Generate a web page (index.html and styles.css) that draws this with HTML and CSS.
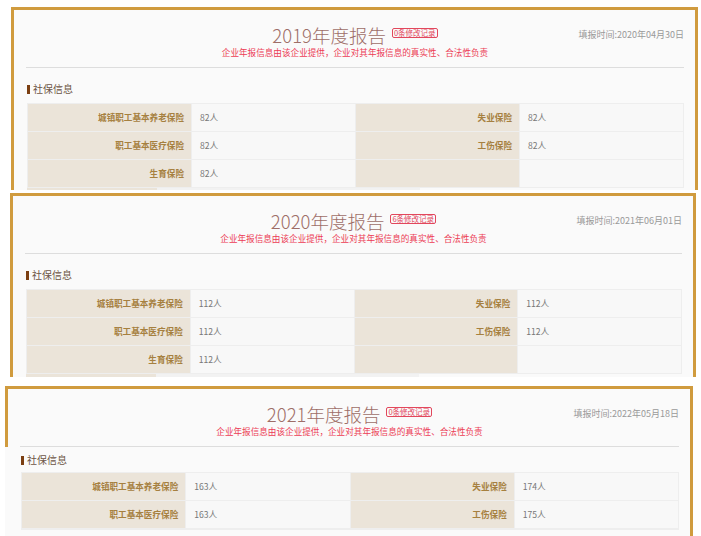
FILE: index.html
```html
<!DOCTYPE html>
<html lang="zh-CN">
<head>
    <meta charset="UTF-8">
    <meta name="viewport" content="width=device-width, initial-scale=1.0">
    <title>企业年度报告</title>
    <link rel="stylesheet" href="styles.css">
</head>
<body>

    <!-- 2019 -->
    <div class="report report-2019">
        <div class="report-head">
            <div class="title-row">
                <span></span>
                <div class="title-group">
                    <span class="title">2019年度报告</span>
                    <span class="badge">0条修改记录</span>
                </div>
                <span class="fill-time">填报时间:2020年04月30日</span>
            </div>
            <div class="notice">企业年报信息由该企业提供，企业对其年报信息的真实性、合法性负责</div>
            <div class="divider"></div>
        </div>
        <div class="report-body">
            <div class="section-title">社保信息</div>
            <table class="info-table">
                <tr><th>城镇职工基本养老保险</th><td>82人</td><th>失业保险</th><td>82人</td></tr>
                <tr><th>职工基本医疗保险</th><td>82人</td><th>工伤保险</th><td>82人</td></tr>
                <tr><th>生育保险</th><td>82人</td><th></th><td></td></tr>
            </table>
            <div class="next-stub"><span></span><span></span></div>
        </div>
    </div>

    <!-- 2020 -->
    <div class="report report-2020">
        <div class="report-head">
            <div class="title-row">
                <span></span>
                <div class="title-group">
                    <span class="title">2020年度报告</span>
                    <span class="badge">6条修改记录</span>
                </div>
                <span class="fill-time">填报时间:2021年06月01日</span>
            </div>
            <div class="notice">企业年报信息由该企业提供，企业对其年报信息的真实性、合法性负责</div>
            <div class="divider"></div>
        </div>
        <div class="report-body">
            <div class="section-title">社保信息</div>
            <table class="info-table">
                <tr><th>城镇职工基本养老保险</th><td>112人</td><th>失业保险</th><td>112人</td></tr>
                <tr><th>职工基本医疗保险</th><td>112人</td><th>工伤保险</th><td>112人</td></tr>
                <tr><th>生育保险</th><td>112人</td><th></th><td></td></tr>
            </table>
            <div class="next-stub"><span></span><span></span></div>
        </div>
    </div>

    <!-- 2021 -->
    <div class="report report-2021">
        <div class="report-head">
            <div class="title-row">
                <span></span>
                <div class="title-group">
                    <span class="title">2021年度报告</span>
                    <span class="badge">0条修改记录</span>
                </div>
                <span class="fill-time">填报时间:2022年05月18日</span>
            </div>
            <div class="notice">企业年报信息由该企业提供，企业对其年报信息的真实性、合法性负责</div>
            <div class="divider"></div>
        </div>
        <div class="report-body">
            <div class="section-title">社保信息</div>
            <table class="info-table">
                <tr><th>城镇职工基本养老保险</th><td>163人</td><th>失业保险</th><td>174人</td></tr>
                <tr><th>职工基本医疗保险</th><td>163人</td><th>工伤保险</th><td>175人</td></tr>
                <!-- 下一行在截图边缘被裁掉 -->
                <tr><th></th><td></td><th></th><td></td></tr>
            </table>
        </div>
    </div>

</body>
</html>
```

FILE: styles.css
```css
body {
    margin: 0;
    background-color: #fff;
    font-family: "Noto Sans CJK SC", "Noto Sans", sans-serif;
}
.report {
    box-sizing: border-box;
    background-color: #fafafa;
    border-top: 3px solid #d09b3e;
    overflow: hidden;
}
.report-2019 {
    width: 687px;
    height: 183px;
    margin: 7px 0 0 11px;
}
.report-2020 {
    width: 686px;
    height: 184px;
    margin: 3px 0 0 10px;
}
.report-2021 {
    width: 688px;
    height: 150px;
    margin: 9px 0 0 5px;
}
.report-head, .report-body {
    border-left: 3px solid #d09b3e;
    border-right: 3px solid #d09b3e;
    padding: 0 11px 0 12px;
}
.report-head {
    padding-top: 15px;
}
.report-body {
    padding-top: 14px;
    padding-bottom: 20px;
}
.report-2021 .report-body {
    padding-top: 6px;
    border-left-color: transparent;
}
.title-row {
    display: grid;
    grid-template-columns: 1fr auto 1fr;
    height: 21px;
}
.title-group {
    display: flex;
    align-items: flex-start;
}
.title {
    font-size: 18.5px;
    font-weight: 300;
    line-height: 21px;
    color: #9e6e68;
}
.badge {
    margin: 3px 0 0 6px;
    padding: 0 1px;
    font-size: 7.5px;
    line-height: 8px;
    color: #e2475c;
    border: 1px solid #e2475c;
    border-radius: 2px;
}
.fill-time {
    justify-self: end;
    margin-top: 4px;
    font-size: 9px;
    line-height: 12px;
    color: #999;
}
.notice {
    text-align: center;
    font-size: 8.6px;
    line-height: 12px;
    color: #ec3c55;
}
.divider {
    margin-top: 9px;
    border-top: 1px solid #ddd;
}
.section-title {
    margin-left: 1px;
    font-size: 10px;
    line-height: 14px;
    color: #6d5544;
}
.section-title::before {
    content: "";
    display: inline-block;
    width: 3px;
    height: 9px;
    margin-right: 3px;
    vertical-align: -1px;
    background-color: #7b3f12;
}
.info-table {
    width: calc(100% - 1px);
    margin: 7px 0 0 1px;
    border-collapse: collapse;
    table-layout: fixed;
}
.info-table th, .info-table td {
    border: 1px solid #eee;
    padding: 0;
    line-height: 27px;
    font-size: 8.6px;
}
.info-table th {
    padding-right: 7px;
    text-align: right;
    font-weight: bold;
    color: #a6803f;
    background-color: #ebe4d9;
}
.info-table td {
    padding-left: 8px;
    text-align: left;
    color: #777;
    background-color: #f8f8f8;
}
.report-2021 .info-table {
    margin-top: 5px;
}
.next-stub {
    display: flex;
    height: 6px;
    margin-left: 1px;
}
.next-stub span:first-child {
    width: 130px;
    background-color: #ebe4d9;
}
.next-stub span:last-child {
    width: 263px;
    background-color: #f2f2f2;
}
```
